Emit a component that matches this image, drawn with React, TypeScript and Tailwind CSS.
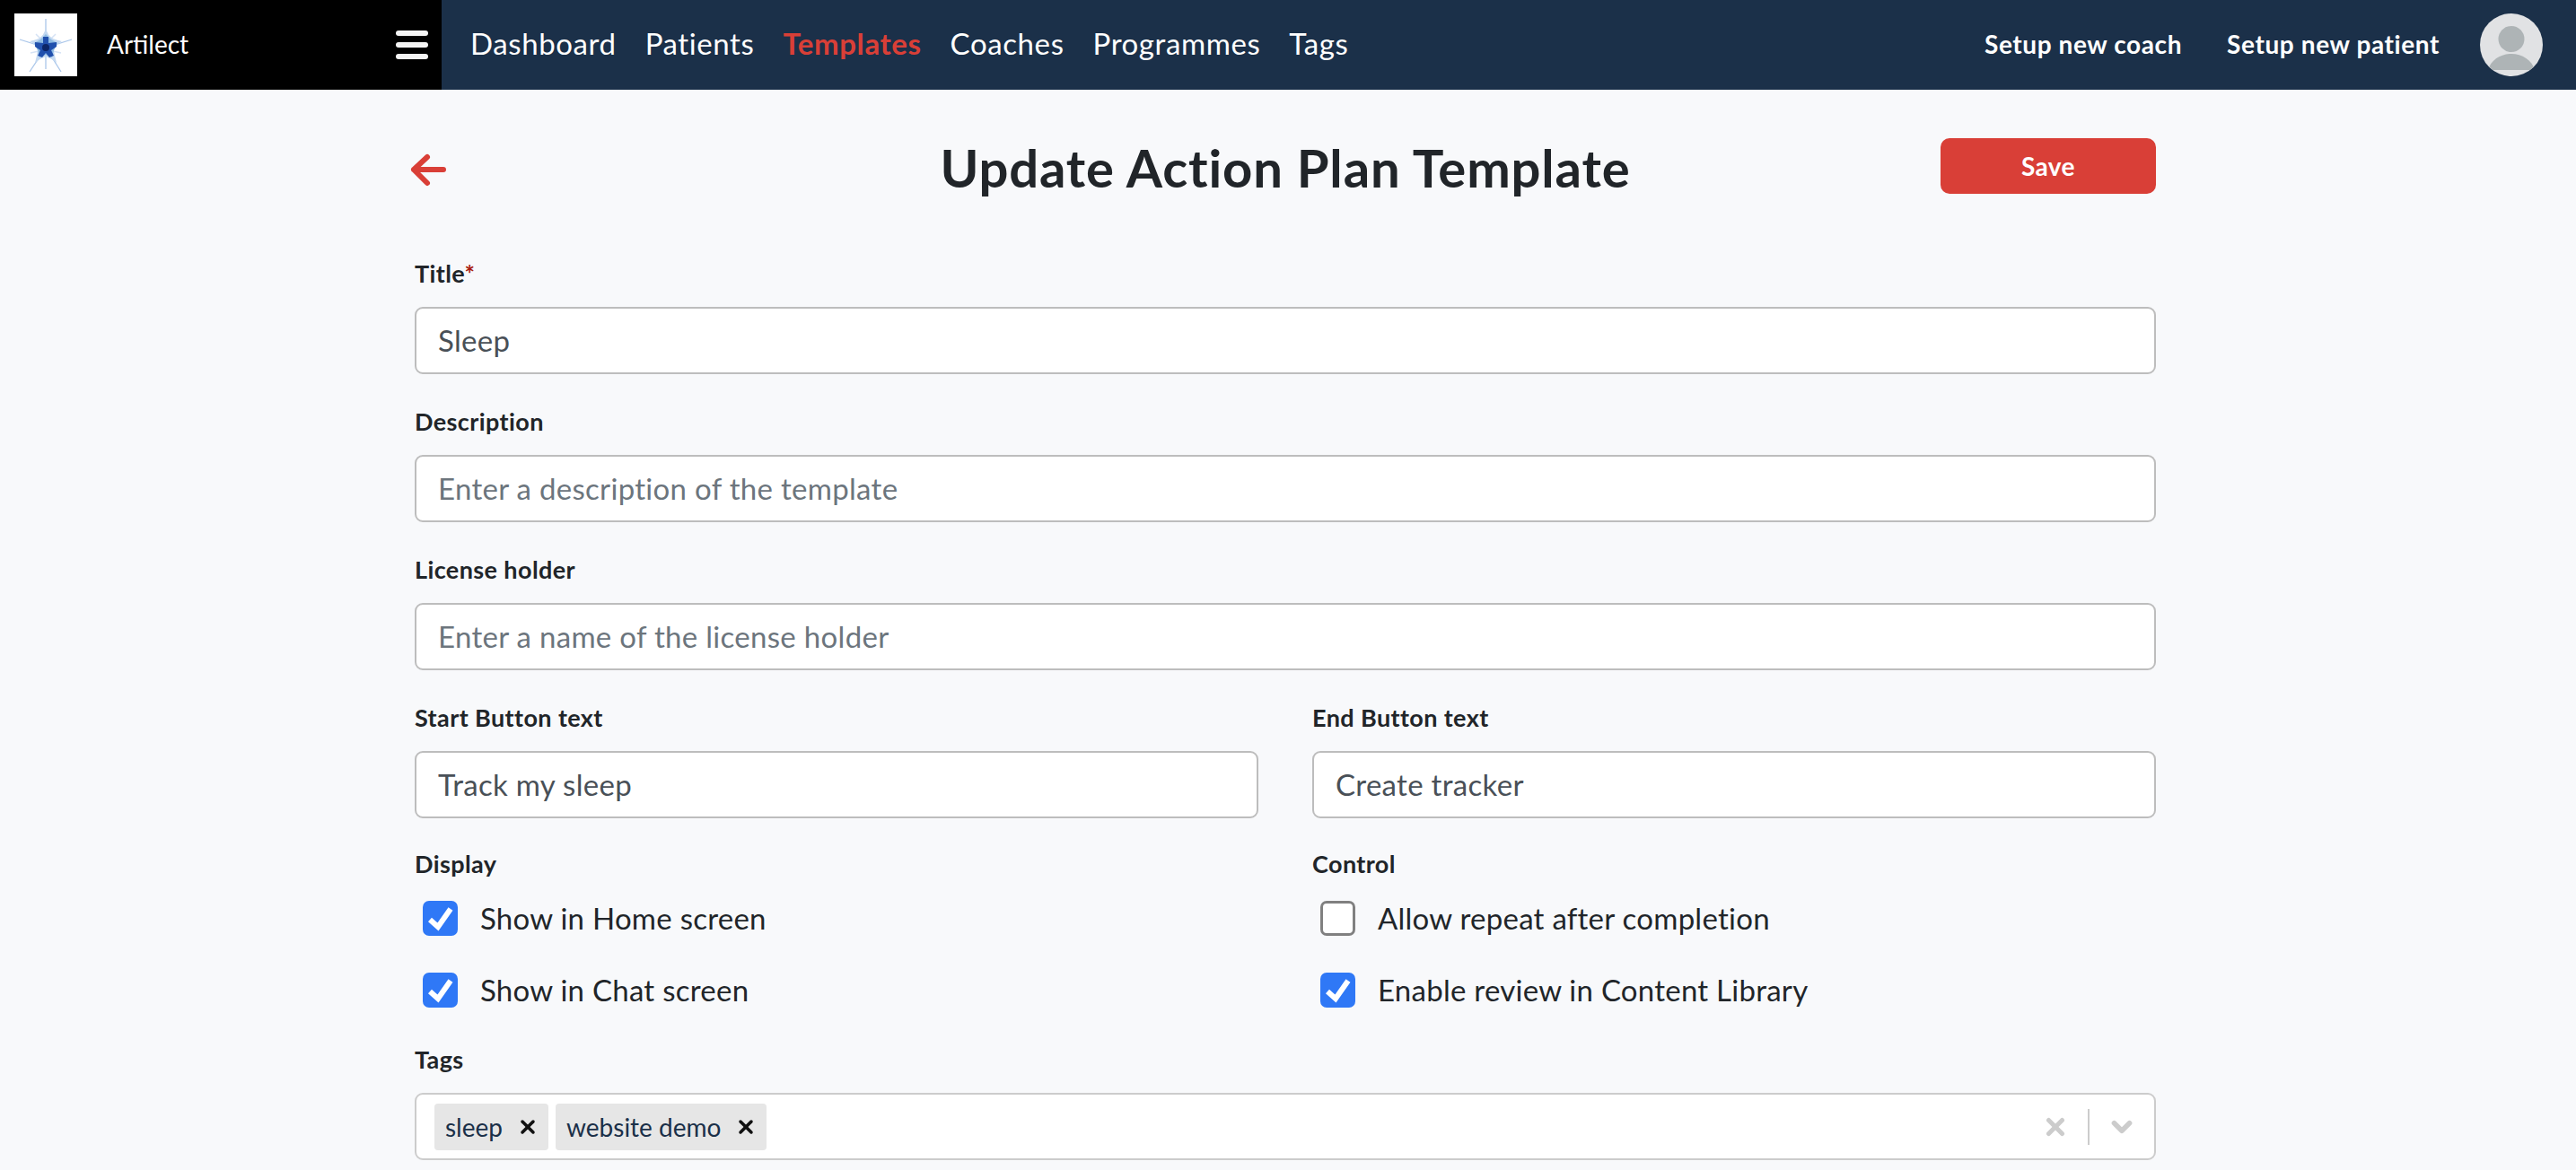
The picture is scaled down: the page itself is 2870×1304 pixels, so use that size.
import { X, ChevronDown } from "lucide-react";

const navItems = ["Dashboard", "Patients", "Templates", "Coaches", "Programmes", "Tags"];

function Logo() {
  return (
    <div className="w-[70px] h-[70px] bg-white shrink-0">
      <svg viewBox="0 0 70 70" className="w-full h-full">
        <g stroke="#aac6ea" strokeWidth="1.3" fill="none">
          <path d="M35 6V62" />
          <path d="M6 29L35 38L64 29" />
          <path d="M17 65L35 38L52 65" />
        </g>
        <g stroke="#d6e3f5" strokeWidth="1.5" fill="none">
          <path d="M24 23L30 29M46 23L40 29M18 44L27 42M52 44L43 42" />
        </g>
        <path
          d="M35 16Q37 25 43 28Q48 30 53 31Q47 34 44 41Q45 48 47 55Q41 50 35 48Q29 50 23 55Q25 48 26 41Q23 34 17 31Q22 30 27 28Q33 25 35 16Z"
          fill="#c4d9f1"
        />
        <path d="M35 23L41 29L48 33L44 41L42 49L35 46L28 49L26 41L22 33L29 29Z" fill="#8fbbe3" />
        <path
          d="M32 26H38V33L47 32V37L41 41L44 47L39 49L35 44L31 49L26 47L29 41L23 37V32L32 33Z"
          fill="#2150ad"
        />
        <circle cx="35" cy="38" r="4" fill="#0c2566" />
      </svg>
    </div>
  );
}

function Avatar() {
  return (
    <div className="w-[70px] h-[70px] rounded-full bg-[#e1e2e4] overflow-hidden shrink-0">
      <svg viewBox="0 0 70 70" className="w-full h-full">
        <circle cx="35" cy="28.5" r="14.5" fill="#aeb4b6" />
        <path d="M9 63C12 52 23 45 35 45C47 45 58 52 61 63Z" fill="#aeb4b6" />
      </svg>
    </div>
  );
}

function BackArrow() {
  return (
    <svg viewBox="0 0 42 40" className="absolute left-[-6px] top-[16px] w-[42px] h-[40px]">
      <path
        d="M38 19H5M20 5L5 19L20 34"
        fill="none"
        stroke="#d93f37"
        strokeWidth="6"
        strokeLinecap="round"
        strokeLinejoin="round"
      />
    </svg>
  );
}

function Label({ text, required }: { text: string; required?: boolean }) {
  return (
    <div className="h-[34px] leading-[34px] text-[27px] font-bold tracking-[0.4px] text-[#212529]">
      {text}
      {required && <span className="text-[#a81c10]">*</span>}
    </div>
  );
}

function TextField({
  label,
  value,
  placeholder,
  required,
}: {
  label: string;
  value?: string;
  placeholder?: string;
  required?: boolean;
}) {
  return (
    <div className="flex flex-col gap-[20px]">
      <Label text={label} required={required} />
      <input
        readOnly
        value={value ?? ""}
        placeholder={placeholder}
        className="h-[75px] w-full bg-white border-2 border-[#bdbdbd] rounded-[9px] px-[24px] pb-[2px] text-[33px] tracking-[0.3px] text-[#495057] placeholder:text-[#6c757d] outline-none"
      />
    </div>
  );
}

function CheckRow({ text, checked }: { text: string; checked?: boolean }) {
  return (
    <div className="flex items-center h-[39px] pl-[9px] gap-[25px]">
      {checked ? (
        <span className="w-[39px] h-[39px] rounded-[7px] bg-[#2f78f6]">
          <svg viewBox="0 0 39 39" className="w-full h-full">
            <path d="M8 21L17 29L31 9" fill="none" stroke="white" strokeWidth="6" />
          </svg>
        </span>
      ) : (
        <span className="w-[39px] h-[39px] rounded-[7px] bg-white border-[3px] border-[#808080]" />
      )}
      <span className="text-[33px] tracking-[0.25px] text-[#212529]">{text}</span>
    </div>
  );
}

function Chip({ text }: { text: string }) {
  return (
    <div className="h-[52px] bg-[#e6e6e6] rounded-[4px] flex items-center pl-[12px] pr-[11px] gap-[16px] text-[28px] text-[#1b3049]">
      <span>{text}</span>
      <X size={24} strokeWidth={3.5} className="text-[#111]" />
    </div>
  );
}

export default function App() {
  return (
    <div className="h-[1304px] overflow-hidden bg-[#f8f9fb] font-['Lato',sans-serif]">
      <header className="h-[100px] flex bg-[#1b3049] text-white">
        <div className="w-[492px] bg-black flex items-center pl-[16px]">
          <Logo />
          <span className="ml-[33px] pb-[2px] text-[28px]">Artilect</span>
          <div className="ml-auto mr-[15px] w-[36px] flex flex-col gap-[7px]">
            <span className="h-[6px] rounded-full bg-[#f4f4f4]" />
            <span className="h-[6px] rounded-full bg-[#f4f4f4]" />
            <span className="h-[6px] rounded-full bg-[#f4f4f4]" />
          </div>
        </div>
        <nav className="flex items-center pl-[32px] pb-[2px] gap-[32px] text-[33px] tracking-[0.6px]">
          {navItems.map((item) => (
            <span key={item} className={item === "Templates" ? "text-[#d93f37] font-bold" : ""}>
              {item}
            </span>
          ))}
        </nav>
        <div className="ml-auto flex items-center pr-[37px] text-[28px] font-bold tracking-[0.6px]">
          <span className="pb-[2px]">Setup new coach</span>
          <span className="ml-[50px] pb-[2px]">Setup new patient</span>
          <div className="ml-[45px]">
            <Avatar />
          </div>
        </div>
      </header>

      <main className="w-[1940px] ml-[462px] pt-[54px]">
        <div className="relative h-[68px] flex items-center justify-center">
          <BackArrow />
          <h1 className="pb-[3px] text-[58px] font-bold tracking-[0.85px] text-[#212529]">Update Action Plan Template</h1>
          <button className="absolute right-0 top-0 w-[240px] h-[62px] bg-[#d93f37] rounded-[10px] text-white text-[28px] font-bold tracking-[0.4px]">
            Save
          </button>
        </div>

        <div className="mt-[66px] flex flex-col gap-[36px]">
          <TextField label="Title" required value="Sleep" />
          <TextField label="Description" placeholder="Enter a description of the template" />
          <TextField label="License holder" placeholder="Enter a name of the license holder" />
          <div className="grid grid-cols-2 gap-x-[60px]">
            <TextField label="Start Button text" value="Track my sleep" />
            <TextField label="End Button text" value="Create tracker" />
          </div>
          <div className="-mt-[2px] grid grid-cols-2 gap-x-[60px]">
            <div>
              <Label text="Display" />
              <div className="mt-[24px] flex flex-col gap-[41px]">
                <CheckRow text="Show in Home screen" checked />
                <CheckRow text="Show in Chat screen" checked />
              </div>
            </div>
            <div>
              <Label text="Control" />
              <div className="mt-[24px] flex flex-col gap-[41px]">
                <CheckRow text="Allow repeat after completion" />
                <CheckRow text="Enable review in Content Library" checked />
              </div>
            </div>
          </div>
          <div className="mt-[5px] flex flex-col gap-[20px]">
            <Label text="Tags" />
            <div className="h-[75px] bg-white border-2 border-[#cccccc] rounded-[9px] flex items-center pl-[20px] pr-[19px]">
              <div className="flex gap-[8px]">
                <Chip text="sleep" />
                <Chip text="website demo" />
              </div>
              <div className="ml-auto flex items-center">
                <X size={30} strokeWidth={4} className="text-[#cccccc]" />
                <span className="w-[2px] h-[40px] bg-[#cccccc] ml-[21px] mr-[19px]" />
                <ChevronDown size={34} strokeWidth={4} className="text-[#cccccc]" />
              </div>
            </div>
          </div>
        </div>
      </main>
    </div>
  );
}
